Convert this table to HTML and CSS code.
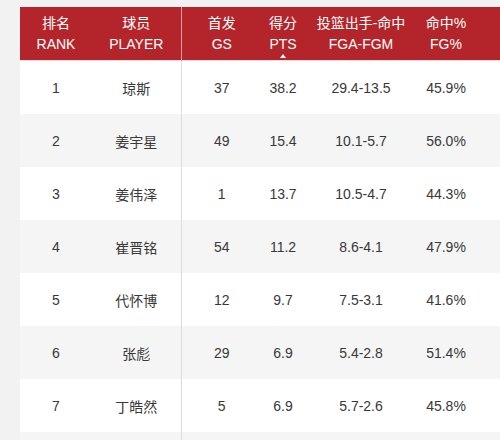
FILE: index.html
```html
<!DOCTYPE html>
<html lang="zh">
<head>
<meta charset="utf-8">
<link rel="stylesheet" href="styles.css">
</head>
<body>
<table class="stats">
  <colgroup>
    <col class="c-rank"><col class="c-player"><col class="c-gs"><col class="c-pts"><col class="c-fga"><col class="c-fg"><col>
  </colgroup>
  <thead>
    <tr>
      <th>排名<br>RANK</th>
      <th class="split">球员<br>PLAYER</th>
      <th>首发<br>GS</th>
      <th class="sorted">得分<br>PTS</th>
      <th>投篮出手-命中<br>FGA-FGM</th>
      <th>命中%<br>FG%</th>
      <th></th>
    </tr>
  </thead>
  <tbody>
    <tr><td>1</td><td class="split">琼斯</td><td>37</td><td>38.2</td><td>29.4-13.5</td><td>45.9%</td><td></td></tr>
    <tr><td>2</td><td class="split">姜宇星</td><td>49</td><td>15.4</td><td>10.1-5.7</td><td>56.0%</td><td></td></tr>
    <tr><td>3</td><td class="split">姜伟泽</td><td>1</td><td>13.7</td><td>10.5-4.7</td><td>44.3%</td><td></td></tr>
    <tr><td>4</td><td class="split">崔晋铭</td><td>54</td><td>11.2</td><td>8.6-4.1</td><td>47.9%</td><td></td></tr>
    <tr><td>5</td><td class="split">代怀博</td><td>12</td><td>9.7</td><td>7.5-3.1</td><td>41.6%</td><td></td></tr>
    <tr><td>6</td><td class="split">张彪</td><td>29</td><td>6.9</td><td>5.4-2.8</td><td>51.4%</td><td></td></tr>
    <tr><td>7</td><td class="split">丁皓然</td><td>5</td><td>6.9</td><td>5.7-2.6</td><td>45.8%</td><td></td></tr>
    <tr><td></td><td class="split"></td><td></td><td></td><td></td><td></td><td></td></tr>
  </tbody>
</table>
</body>
</html>
```

FILE: styles.css
```css
html, body {
  margin: 0;
  padding: 0;
  background: #f2f2f2;
  overflow: hidden;
}
body {
  padding: 7px 0 0 20px;
  font-family: "Liberation Sans", "Noto Sans CJK SC", sans-serif;
  font-size: 14px;
}
.stats {
  border-collapse: collapse;
  table-layout: fixed;
  width: 480px;
}
.c-rank { width: 72px; }
.c-player { width: 89px; }
.c-gs { width: 81px; }
.c-pts { width: 42px; }
.c-fga { width: 114px; }
.c-fg { width: 56px; }
.stats th {
  background: #b3252a;
  color: #fff;
  font-weight: normal;
  height: 53px;
  padding: 0;
  line-height: 21px;
  text-align: center;
  vertical-align: middle;
  white-space: nowrap;
}
.stats th.split {
  border-right: 1px solid rgba(255, 255, 255, 0.55);
}
.stats th.sorted {
  position: relative;
}
.stats th.sorted::after {
  content: "";
  position: absolute;
  left: 50%;
  bottom: 2px;
  margin-left: -3px;
  border-left: 3.5px solid transparent;
  border-right: 3.5px solid transparent;
  border-bottom: 4px solid #fff;
}
.stats thead tr {
  border-bottom: 1px solid #f6dada;
}
.stats td {
  height: 53px;
  padding: 0;
  text-align: center;
  vertical-align: middle;
  color: #383838;
  background: #fff;
  white-space: nowrap;
}
.stats tbody tr:nth-child(even) td {
  background: #f5f5f5;
}
.stats td.split {
  border-right: 1px solid #dcdcdc;
}
```
